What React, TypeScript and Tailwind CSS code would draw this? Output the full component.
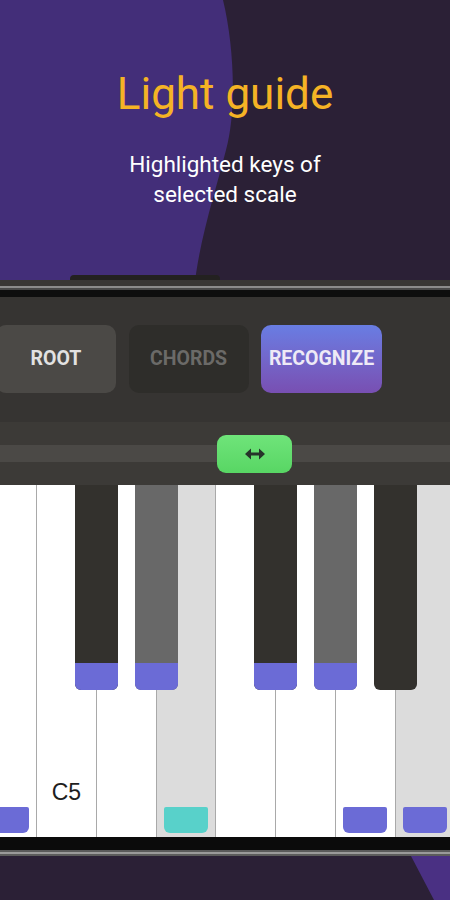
import React from "react"

// white keys from left edge (first one is cut off by the screen)
const whiteKeys = [
  { gray: false, mark: "blue" },
  { gray: false, mark: "", label: "C5" },
  { gray: false, mark: "" },
  { gray: true, mark: "teal" },
  { gray: false, mark: "" },
  { gray: false, mark: "" },
  { gray: false, mark: "blue" },
  { gray: true, mark: "blue" },
]

const blackKeys = [
  { left: 75, light: false, lit: true },
  { left: 135, light: true, lit: true },
  { left: 254, light: false, lit: true },
  { left: 314, light: true, lit: true },
  { left: 374, light: false, lit: false },
]

const font = { fontFamily: "Roboto, 'Liberation Sans', sans-serif" }

function Arrows() {
  return (
    <svg width="20" height="12" viewBox="0 0 20 12">
      <path d="M0 6 L6 0.5 L6 11.5 Z M20 6 L14 0.5 L14 11.5 Z" fill="#26342a" />
      <rect x="5" y="4.5" width="10" height="3" fill="#26342a" />
    </svg>
  )
}

export default function App() {
  return (
    <div className="relative w-[450px] h-[900px] overflow-hidden bg-[#2b2036]" style={font}>
      <svg className="absolute inset-0" width="450" height="900" viewBox="0 0 450 900">
        <path d="M0 0 H223 C234 45 237 110 226 150 C216 190 199 240 194 290 L0 290 Z" fill="#432e79" />
        <polygon points="411,856 450,856 450,900 434,900" fill="#4a3083" />
      </svg>

      <div className="relative flex flex-col">
        {/* heading */}
        <div className="h-[275px] pt-[72px] flex flex-col items-center text-center">
          <h1 className="text-[44px] leading-none text-[#f5b325]">Light guide</h1>
          <p className="mt-[33px] text-[22.5px] leading-[30px] text-white">
            Highlighted keys of
            <br />
            selected scale
          </p>
        </div>

        {/* phone top bezel */}
        <div className="h-[5px]">
          <div className="ml-[70px] w-[150px] h-full bg-[#232120] rounded-t-sm" />
        </div>
        <div className="h-[6px] bg-[#393735]" />
        <div className="h-[2px] bg-[#8c8c8c]" />
        <div className="h-[2px] bg-[#4a4a4a]" />
        <div className="h-[7px] bg-[#0e0e0e]" />

        {/* controls */}
        <div className="h-[188px] bg-[#363432] flex flex-col">
          <div className="mt-[28px] -ml-1 flex gap-[12.5px] h-[68px]">
            <div className="w-[120px] rounded-[10px] bg-[#4b4946] flex items-center justify-center text-[19.5px] font-bold text-[#e2e2e2]">
              ROOT
            </div>
            <div className="w-[120px] rounded-[10px] bg-[#2e2d2a] flex items-center justify-center text-[19.5px] font-bold text-[#6b6a68]">
              CHORDS
            </div>
            <div className="w-[121px] rounded-[10px] bg-gradient-to-b from-[#687de3] to-[#784fb2] flex items-center justify-center text-[19.5px] font-bold text-[#eeeaf6]">
              RECOGNIZE
            </div>
          </div>
          <div className="mt-[29px] relative h-[63px] bg-[#3c3a37]">
            <div className="mt-[23px] h-[17px] bg-[#4b4946]" />
            <div className="absolute left-[217px] top-[13px] w-[75px] h-[38px] rounded-[9px] bg-gradient-to-b from-[#6fe47a] to-[#58d664] flex items-center justify-center">
              <Arrows />
            </div>
          </div>
        </div>

        {/* keyboard */}
        <div className="relative h-[352px] overflow-hidden bg-white">
          <div className="flex h-full -ml-[22.7px]">
            {whiteKeys.map((k, i) => (
              <div
                key={i}
                className={`relative shrink-0 w-[59.75px] h-full border-r border-[#a9a9a9] flex flex-col items-center justify-end pb-[4px] ${k.gray ? "bg-[#dcdcdc]" : "bg-white"}`}
              >
                {k.label && (
                  <div className="mb-[3px] text-[23px] leading-none text-[#1e1e1e]" style={{ fontFamily: "'Liberation Sans', Arial, sans-serif" }}>
                    {k.label}
                  </div>
                )}
                <div
                  className={`w-[44px] h-[26px] rounded-t-[2px] rounded-b-[6px] ${k.mark === "blue" ? "bg-[#6b6bd6]" : k.mark === "teal" ? "bg-[#58d1ca]" : "bg-transparent"}`}
                />
              </div>
            ))}
          </div>
          {blackKeys.map((b, i) => (
            <div
              key={i}
              className={`absolute top-0 w-[43px] h-[205px] rounded-b-[6px] overflow-hidden flex flex-col justify-end ${b.light ? "bg-[#686868]" : "bg-[#33312d]"}`}
              style={{ left: b.left }}
            >
              {b.lit && <div className="h-[27px] bg-[#6b6bd6]" />}
            </div>
          ))}
        </div>

        {/* bottom bezel */}
        <div className="h-[13px] bg-[#0b0b0b]" />
        <div className="h-[2px] bg-[#5a5a5a]" />
        <div className="h-[2px] bg-[#9a9a9a]" />
        <div className="h-[2px] bg-[#5c5c5c]" />
      </div>
    </div>
  )
}
